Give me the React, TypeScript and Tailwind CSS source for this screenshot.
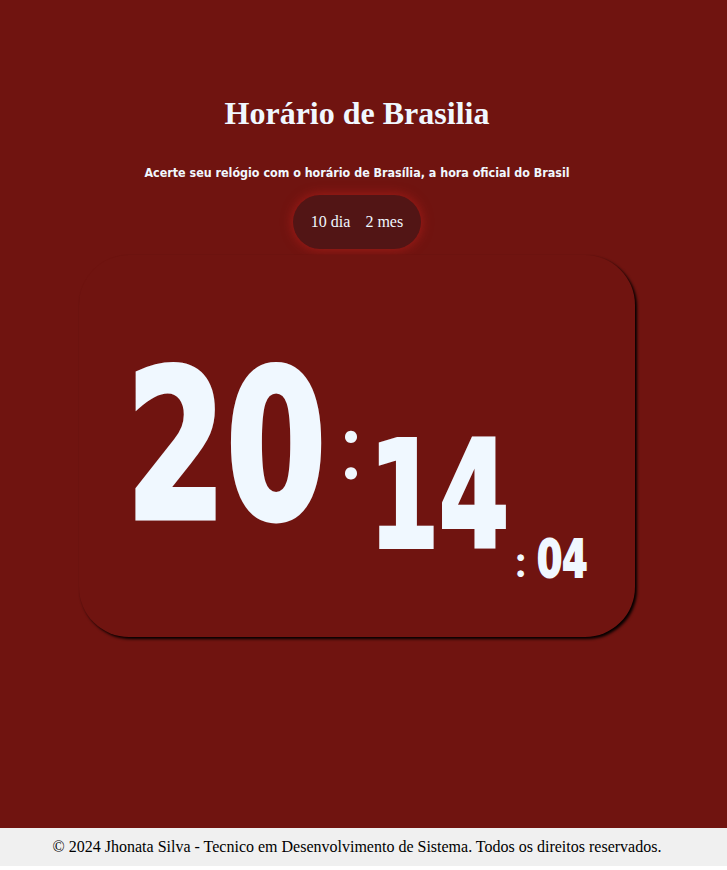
import React from "react";

const digitFont =
  "font-['DejaVu_Sans_Condensed','DejaVu_Sans',sans-serif] font-bold leading-none";

export default function App() {
  return (
    <div className="w-full">
      <div className="min-h-[828px] bg-[#701410] flex flex-col items-center pt-[95px] pr-[13px]">
        <h1 className="font-['Liberation_Serif','Times_New_Roman',serif] font-bold text-[32px] leading-[37px] text-[#f0f8ff]">
          Horário de Brasilia
        </h1>
        <p className="mt-[33px] font-['DejaVu_Sans_Condensed','DejaVu_Sans',sans-serif] font-bold text-[12.4px] leading-[16px] text-[#f0f8ff]">
          Acerte seu relógio com o horário de Brasília, a hora oficial do Brasil
        </p>
        <div className="mt-[14px] h-[54px] w-[128px] rounded-full bg-[#521515] shadow-[0_0_12px_#a81c18] flex items-center justify-center gap-[15px] font-['Liberation_Serif','Times_New_Roman',serif] text-[16px] text-[#f0f8ff]">
          <span>10 dia</span>
          <span>2 mes</span>
        </div>
        <div className="mt-[6px] w-[556px] h-[382px] rounded-[50px] bg-[#701410] shadow-[2px_2px_3px_#000] flex items-start pl-[47px] text-[#f0f8ff]">
          <div className="mt-[89px] w-[196px] shrink-0">
            <span
              className={`${digitFont} inline-block origin-top-left scale-x-[0.776] text-[206px] [-webkit-text-stroke:5px_#f0f8ff]`}
            >
              20
            </span>
          </div>
          <span className="mt-[139px] ml-[17px] font-['Lato',sans-serif] font-normal text-[96px] leading-none">
            :
          </span>
          <div className="mt-[167px] ml-[6px] w-[133px] shrink-0">
            <span
              className={`${digitFont} inline-block origin-top-left scale-x-[0.755] text-[148px] [-webkit-text-stroke:4px_#f0f8ff]`}
            >
              14
            </span>
          </div>
          <span className="mt-[283px] ml-[13px] font-['Lato',sans-serif] font-bold text-[44px] leading-none">
            :
          </span>
          <div className="mt-[279px] ml-[11px] w-[50px] shrink-0">
            <span
              className={`${digitFont} inline-block origin-top-left scale-x-[0.79] text-[51px] [-webkit-text-stroke:2px_#f0f8ff]`}
            >
              04
            </span>
          </div>
        </div>
      </div>
      <footer className="h-[38px] bg-[#f0f0f0] flex items-center justify-center pr-[13px] font-['Liberation_Serif','Times_New_Roman',serif] text-[16px] text-black">
        © 2024 Jhonata Silva - Tecnico em Desenvolvimento de Sistema. Todos os direitos reservados.
      </footer>
    </div>
  );
}
